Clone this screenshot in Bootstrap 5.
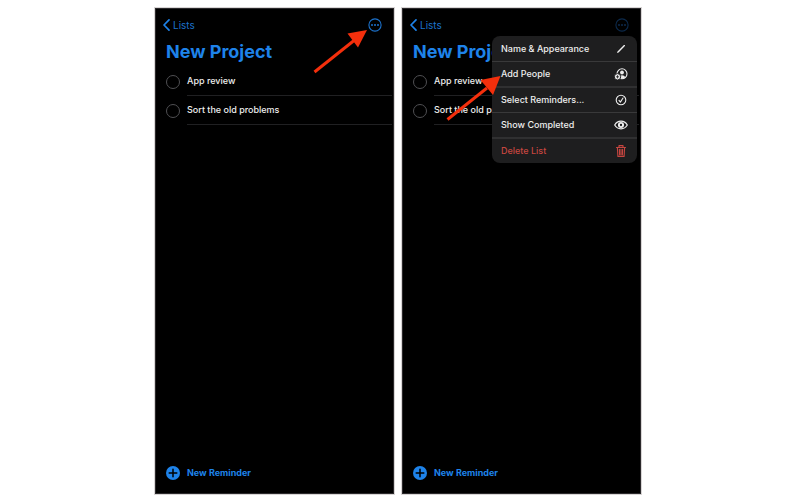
<!DOCTYPE html>
<html lang="en">
<head>
<meta charset="utf-8">
<meta name="viewport" content="width=device-width, initial-scale=1">
<title>New Project</title>
<link href="https://cdn.jsdelivr.net/npm/bootstrap@5.3.0/dist/css/bootstrap.min.css" rel="stylesheet">
<style>
body { font-family: Inter, "Liberation Sans", sans-serif; font-size: 9px; line-height: 16px; background: #fff; }
.stage { min-height: 100vh; padding: 8px 3px 6px 0; gap: 8px; }
.phone { flex: 0 1 239px; background: #000; border: 1px solid #2b292b; outline: 1px solid #d8d5d5; color: #eee; }
.topbar { padding: 8px 11px 0 7px; }
.blue { color: #1e83ea; }
.back-link, .more-btn { color: #1c72cc; }
.back-link { gap: 3px; font-size: 10px; }
.more-btn.faded { color: #0c2a4c; }
.list-title { font-size: 18px; line-height: 26px; font-weight: 700; margin: 6px 0 2px; padding-left: 10px; white-space: nowrap; }
.task { gap: 7px; padding: 0 1px 0 10px; }
.task-body { height: 29px; border-bottom: 1px solid #202022; font-weight: 500; }
.task .form-check-input { width: 14px; height: 14px; background-color: transparent; border: 1px solid #505053; }
.add-btn { gap: 7px; margin: 0 0 12px 10px; font-size: 9px; line-height: 16px; font-weight: 700; }
.menu { top: 27px; right: 3px; width: 145px; padding-top: 1px; background: #1e1e1f; border-radius: 8px; z-index: 1; }
.menu-item { height: 25px; padding: 0 9px; color: #eee; font-weight: 500; border-bottom: 1px solid #39393a !important; }
.menu-item.group-end { height: 26px; border-bottom: 2px solid #303031 !important; }
.menu-item.danger { height: 24px; color: #c64640; border-bottom: 0 !important; }
.arrow { z-index: 2; pointer-events: none; }
.arrow-one { top: 20px; left: 157px; }
.arrow-two { top: 66px; left: 43px; }
</style>
<script defer src="https://cdn.jsdelivr.net/npm/bootstrap@5.3.0/dist/js/bootstrap.bundle.min.js"></script>
</head>
<body>
<main class="stage d-flex justify-content-center align-items-stretch">

  <section class="phone position-relative d-flex flex-column" aria-label="List">
    <header class="topbar d-flex justify-content-between align-items-center">
      <a href="#" class="back-link d-flex align-items-center text-decoration-none">
        <svg width="7" height="12" viewBox="0 0 7 12" fill="none" stroke="#1e83ea" stroke-width="1.7" stroke-linecap="round" stroke-linejoin="round"><path d="M6 .9 1 6l5 5.1"/></svg>
        Lists
      </a>
      <button type="button" class="more-btn btn p-0 border-0 d-flex" aria-label="More">
        <svg width="14" height="14" viewBox="0 0 14 14"><circle cx="7" cy="7" r="6.1" fill="none" stroke="currentColor" stroke-width="1.1"/><g fill="currentColor"><circle cx="4" cy="7" r="1"/><circle cx="7" cy="7" r="1"/><circle cx="10" cy="7" r="1"/></g></svg>
      </button>
    </header>
    <h2 class="list-title blue">New Project</h2>
    <ul class="list-unstyled mb-0">
      <li class="task d-flex align-items-center">
        <input class="form-check-input rounded-circle m-0 flex-shrink-0" type="checkbox" id="a1">
        <label class="task-body flex-fill d-flex align-items-center" for="a1">App review</label>
      </li>
      <li class="task d-flex align-items-center">
        <input class="form-check-input rounded-circle m-0 flex-shrink-0" type="checkbox" id="a2">
        <label class="task-body flex-fill d-flex align-items-center" for="a2">Sort the old problems</label>
      </li>
    </ul>
    <button type="button" class="add-btn btn p-0 border-0 blue mt-auto align-self-start d-flex align-items-center">
      <svg width="14" height="14" viewBox="0 0 14 14"><circle cx="7" cy="7" r="7" fill="#1e83ea"/><path d="M7 3.2v7.6M3.2 7h7.6" stroke="#000" stroke-width="1.5" stroke-linecap="round"/></svg>
      New Reminder
    </button>
    <svg class="arrow arrow-one position-absolute" width="56" height="45" viewBox="0 0 56 45" aria-hidden="true"><path d="M1.5 43 41 11.5" stroke="#f42f0c" stroke-width="3"/><path d="M54 1 34.5 4.5 45 18.5z" fill="#f42f0c"/></svg>
  </section>

  <section class="phone position-relative d-flex flex-column" aria-label="List with menu open">
    <header class="topbar d-flex justify-content-between align-items-center">
      <a href="#" class="back-link d-flex align-items-center text-decoration-none">
        <svg width="7" height="12" viewBox="0 0 7 12" fill="none" stroke="#1e83ea" stroke-width="1.7" stroke-linecap="round" stroke-linejoin="round"><path d="M6 .9 1 6l5 5.1"/></svg>
        Lists
      </a>
      <button type="button" class="more-btn faded btn p-0 border-0 d-flex" aria-label="More" aria-expanded="true">
        <svg width="14" height="14" viewBox="0 0 14 14"><circle cx="7" cy="7" r="6.1" fill="none" stroke="currentColor" stroke-width="1.1"/><g fill="currentColor"><circle cx="4" cy="7" r="1"/><circle cx="7" cy="7" r="1"/><circle cx="10" cy="7" r="1"/></g></svg>
      </button>
    </header>
    <h2 class="list-title blue">New Project</h2>
    <ul class="list-unstyled mb-0">
      <li class="task d-flex align-items-center">
        <input class="form-check-input rounded-circle m-0 flex-shrink-0" type="checkbox" id="b1">
        <label class="task-body flex-fill d-flex align-items-center" for="b1">App review</label>
      </li>
      <li class="task d-flex align-items-center">
        <input class="form-check-input rounded-circle m-0 flex-shrink-0" type="checkbox" id="b2">
        <label class="task-body flex-fill d-flex align-items-center" for="b2">Sort the old problems</label>
      </li>
    </ul>
    <button type="button" class="add-btn btn p-0 border-0 blue mt-auto align-self-start d-flex align-items-center">
      <svg width="14" height="14" viewBox="0 0 14 14"><circle cx="7" cy="7" r="7" fill="#1e83ea"/><path d="M7 3.2v7.6M3.2 7h7.6" stroke="#000" stroke-width="1.5" stroke-linecap="round"/></svg>
      New Reminder
    </button>

    <div class="menu position-absolute overflow-hidden d-flex flex-column" role="menu">
      <button type="button" role="menuitem" class="menu-item bg-transparent border-0 d-flex justify-content-between align-items-center">Name &amp; Appearance
        <svg width="14" height="14" viewBox="0 0 14 14"><path d="m3 11 .5-1.6 6.4-6.3c.7-.6 1.6.3 1 1l-6.3 6.4z" fill="currentColor"/></svg>
      </button>
      <button type="button" role="menuitem" class="menu-item group-end bg-transparent border-0 d-flex justify-content-between align-items-center">Add People
        <svg width="14" height="14" viewBox="0 0 14 14"><circle cx="8" cy="6.8" r="5" fill="none" stroke="currentColor" stroke-width="1.1"/><circle cx="8" cy="5.5" r="1.9" fill="currentColor"/><path d="M4.9 10.5c.3-3 5.9-3 6.2 0-1.8 1.6-4.4 1.6-6.2 0z" fill="currentColor"/><circle cx="3.5" cy="9.8" r="3.2" fill="currentColor" stroke="#1e1e1f"/><path d="M3.5 8.2v3.2M1.9 9.8h3.2" stroke="#1e1e1f" stroke-width=".8"/></svg>
      </button>
      <button type="button" role="menuitem" class="menu-item bg-transparent border-0 d-flex justify-content-between align-items-center">Select Reminders...
        <svg width="14" height="14" viewBox="0 0 14 14" fill="none" stroke="currentColor" stroke-width="1.1" stroke-linecap="round" stroke-linejoin="round"><circle cx="7" cy="7" r="4.8"/><path d="m5 7.4 1.4 1.7L9 5"/></svg>
      </button>
      <button type="button" role="menuitem" class="menu-item group-end bg-transparent border-0 d-flex justify-content-between align-items-center">Show Completed
        <svg width="14" height="14" viewBox="0 0 14 14"><path d="M.7 7C3.6 1.9 10.4 1.9 13.3 7 10.4 12.1 3.6 12.1.7 7z" fill="none" stroke="currentColor" stroke-width="1.2"/><circle cx="7" cy="7" r="2.1" fill="none" stroke="currentColor" stroke-width="1.9"/></svg>
      </button>
      <button type="button" role="menuitem" class="menu-item danger bg-transparent border-0 d-flex justify-content-between align-items-center">Delete List
        <svg width="14" height="14" viewBox="0 0 14 14" fill="none" stroke="currentColor" stroke-width="1.1" stroke-linecap="round" stroke-linejoin="round"><path d="M2.5 3.5h9M5 3.3V1.6h4v1.7M3.4 3.7l.5 8.7h6.2l.5-8.7M5.4 5.3l.2 5.4M7 5.3v5.4M8.6 5.3l-.2 5.4"/></svg>
      </button>
    </div>
    <svg class="arrow arrow-two position-absolute" width="56" height="46" viewBox="0 0 56 46" aria-hidden="true"><path d="M1.5 44.5 41 13" stroke="#f42f0c" stroke-width="3"/><path d="M54.5 1 34.5 5 47 20z" fill="#f42f0c"/></svg>
  </section>

</main>
</body>
</html>
